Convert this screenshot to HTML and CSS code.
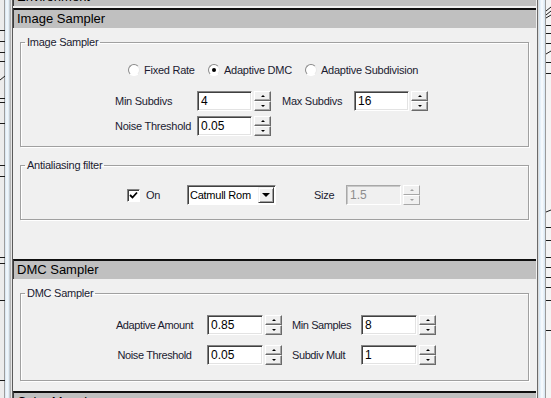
FILE: index.html
```html
<!DOCTYPE html>
<html>
<head>
	<title>V-Ray Settings</title>
	<link rel="stylesheet" href="styles.css">
</head>

<body>
	<div class="desk">
		<div class="edgeLeft">
			<svg class="ticks" width="5" height="398">
				<line x1="0" y1="30.5" x2="5" y2="30.5" />
				<line x1="0" y1="41.5" x2="5" y2="41.5" />
				<line x1="0" y1="52.5" x2="5" y2="52.5" />
				<line x1="0" y1="61.5" x2="5" y2="61.5" />
				<line x1="0" y1="80" x2="5" y2="76" />
				<line x1="0" y1="98.5" x2="5" y2="98.5" />
				<line x1="0" y1="102.5" x2="5" y2="102.5" />
				<line x1="0" y1="123.5" x2="5" y2="123.5" />
				<line x1="0" y1="165.5" x2="5" y2="165.5" />
				<line x1="0" y1="176.5" x2="5" y2="176.5" />
				<line x1="0" y1="257.5" x2="5" y2="257.5" />
				<line x1="0" y1="263.5" x2="5" y2="263.5" />
				<line x1="0" y1="300.5" x2="5" y2="300.5" />
				<line x1="0" y1="380.5" x2="5" y2="380.5" />
			</svg>
		</div>

		<div class="panel">
			<div class="rollHead first">Environment</div>
			<div class="rollHead">Image Sampler</div>
			<div class="rollBody">
				<fieldset class="group">
					<legend>Image Sampler</legend>
					<div class="row radios">
						<label class="radio r1"><span class="dot"></span>Fixed Rate</label>
						<label class="radio r2"><span class="dot on"></span>Adaptive DMC</label>
						<label class="radio"><span class="dot"></span>Adaptive Subdivision</label>
					</div>
					<div class="row subdivs">
						<span class="lbl w82">Min Subdivs</span>
						<span class="field">4</span>
						<span class="spin"><span class="spinBtn"><i class="up"></i></span><span class="spinBtn"><i class="down"></i></span></span>
						<span class="lbl w72 gapL">Max Subdivs</span>
						<span class="field">16</span>
						<span class="spin"><span class="spinBtn"><i class="up"></i></span><span class="spinBtn"><i class="down"></i></span></span>
					</div>
					<div class="row subdivs tight">
						<span class="lbl w82">Noise Threshold</span>
						<span class="field">0.05</span>
						<span class="spin"><span class="spinBtn"><i class="up"></i></span><span class="spinBtn"><i class="down"></i></span></span>
					</div>
				</fieldset>

				<fieldset class="group aa">
					<legend>Antialiasing filter</legend>
					<div class="row filter">
						<label class="check">
							<span class="box">
								<svg width="9" height="9" viewBox="0 0 9 9"><polyline points="1,4 3.5,6.5 8,1.5" /></svg>
							</span>On
						</label>
						<span class="combo">
							<span class="comboText">Catmull Rom</span>
							<span class="comboBtn"><i class="drop"></i></span>
						</span>
						<span class="lbl sizeLbl">Size</span>
						<span class="field off">1.5</span>
						<span class="spin off"><span class="spinBtn"><i class="up"></i></span><span class="spinBtn"><i class="down"></i></span></span>
					</div>
				</fieldset>
			</div>

			<div class="rollHead">DMC Sampler</div>
			<div class="rollBody">
				<fieldset class="group dmc">
					<legend>DMC Sampler</legend>
					<div class="row amounts">
						<span class="lbl mid">Adaptive Amount</span>
						<span class="field wide">0.85</span>
						<span class="spin"><span class="spinBtn"><i class="up"></i></span><span class="spinBtn"><i class="down"></i></span></span>
						<span class="lbl w69">Min Samples</span>
						<span class="field wide">8</span>
						<span class="spin"><span class="spinBtn"><i class="up"></i></span><span class="spinBtn"><i class="down"></i></span></span>
					</div>
					<div class="row amounts second">
						<span class="lbl mid">Noise Threshold</span>
						<span class="field wide">0.05</span>
						<span class="spin"><span class="spinBtn"><i class="up"></i></span><span class="spinBtn"><i class="down"></i></span></span>
						<span class="lbl w69">Subdiv Mult</span>
						<span class="field wide">1</span>
						<span class="spin"><span class="spinBtn"><i class="up"></i></span><span class="spinBtn"><i class="down"></i></span></span>
					</div>
				</fieldset>
			</div>

			<div class="rollHead">Color Mapping</div>
		</div>

		<div class="edgeRight">
			<svg class="ticks" width="5" height="398">
				<line x1="0" y1="11" x2="5" y2="7" />
				<line x1="0" y1="15" x2="5" y2="11" />
				<line x1="0" y1="18" x2="5" y2="15" />
				<line x1="0" y1="25.5" x2="5" y2="25.5" />
				<line x1="0" y1="33.5" x2="5" y2="33.5" />
				<line x1="0" y1="43.5" x2="5" y2="43.5" />
				<line x1="0" y1="54" x2="5" y2="51" />
				<line x1="0" y1="62.5" x2="5" y2="62.5" />
				<line x1="0" y1="73.5" x2="5" y2="73.5" />
				<line x1="0" y1="212" x2="5" y2="210" />
				<line x1="0" y1="227.5" x2="5" y2="227.5" />
				<line x1="0" y1="240.5" x2="5" y2="240.5" />
				<line x1="0" y1="257.5" x2="5" y2="257.5" />
				<line x1="0" y1="267.5" x2="5" y2="267.5" />
				<line x1="0" y1="277.5" x2="5" y2="277.5" />
				<line x1="0" y1="287.5" x2="5" y2="287.5" />
				<line x1="0" y1="300.5" x2="5" y2="300.5" />
				<line x1="0" y1="330.5" x2="5" y2="330.5" />
			</svg>
		</div>
	</div>
</body>
</html>
```

FILE: styles.css
```css
body {
	margin: 0;
	font-family: "Liberation Sans", Arial, sans-serif;
	font-size: 11px;
	letter-spacing: -0.25px;
	color: #1b1b30;
	background: #f0f0f0;
}

.desk {
	display: flex;
	height: 398px;
	overflow: hidden;
}

/* window edges on both sides */
.edgeLeft {
	width: 13px;
	flex: none;
	display: flex;
	background: linear-gradient(to right, #ececec 0 4px, #9c9c9c 4px 5px, #d3e3f0 5px, #f7fbfe 7px, #d9e7f2 9px, #b4b4b4 10px 11px, #e6e6e6 11px 12px, #5a5a5a 12px 13px);
}

.edgeRight {
	flex: 1;
	display: flex;
	justify-content: flex-end;
	background: linear-gradient(to right, #6a6a6a 0 1px, #dcdcdc 1px 2px, #d2e5f3 2px, #fbfdff 5px, #d6e6f2 8px, #9a9a9a 8px 9px, #f4f4f4 9px);
}

.ticks line {
	stroke: #1a1a1a;
	stroke-width: 1;
}

.panel {
	width: 524px;
	flex: none;
	background: #f0f0f0;
}

/* rollout title bars */
.rollHead {
	height: 18px;
	line-height: 18px;
	margin: 2px 1px 0 0;
	padding-left: 3px;
	border-top: 2px solid #101010;
	border-left: 1px solid #3c3c3c;
	background: #c0c0c0;
	color: #000;
	font-size: 13px;
	letter-spacing: 0;
}

.rollHead.first {
	margin-top: -14px;
}

.rollBody {
	padding-bottom: 8px;
}

/* group boxes */
.group {
	margin: 8px 8px 0 7px;
	padding: 0 0 10px;
	min-width: 0;
	border: 1px solid #a0a0a0;
	box-shadow: inset 1px 1px 0 #fff, 1px 1px 0 #fff;
}

.group legend {
	margin-left: 4px;
	padding: 0 2px;
	line-height: 13px;
}

.group.aa {
	margin-top: 12px;
	margin-bottom: 29px;
	padding-bottom: 14px;
}

.group.dmc {
	padding-bottom: 15px;
}

.row {
	display: flex;
	align-items: center;
	height: 20px;
}

.lbl {
	flex: none;
	white-space: nowrap;
}

.w82 { width: 82px; }
.w72 { width: 72px; }
.w69 { width: 69px; margin-left: 10px; }
.gapL { margin-left: 11px; }

/* radios */
.radios {
	height: 14px;
	margin-top: 14px;
	padding-left: 107px;
}

.radio {
	display: flex;
	align-items: center;
	flex: none;
}

.radio.r1 { width: 80px; }
.radio.r2 { width: 97px; }

.dot {
	width: 12px;
	height: 12px;
	box-sizing: border-box;
	margin-right: 4px;
	border-radius: 50%;
	border: 1px solid;
	border-color: #8a8a8a #e8e8e8 #fff #8a8a8a;
	background: #fff;
	display: flex;
	align-items: center;
	justify-content: center;
}

.dot.on::after {
	content: "";
	width: 4px;
	height: 4px;
	border-radius: 50%;
	background: #000;
}

.subdivs {
	margin-top: 14px;
	padding-left: 94px;
}

.subdivs.tight {
	margin-top: 5px;
}

/* edit boxes and spinners */
.field {
	flex: none;
	width: 55px;
	height: 20px;
	box-sizing: border-box;
	padding-left: 3px;
	line-height: 18px;
	border: 1px solid;
	border-color: #838383 #fff #fff #838383;
	box-shadow: inset 1px 1px 0 #404040, inset -1px -1px 0 #e3e3e3;
	background: #fff;
	color: #000;
	font-size: 12px;
	letter-spacing: 0;
}

.field.wide {
	width: 56px;
}

.field.off {
	background: #f0f0f0;
	color: #8d8d8d;
	border-color: #a8a8a8 #fff #fff #a8a8a8;
	box-shadow: inset 1px 1px 0 #c8c8c8;
}

.spin {
	flex: none;
	width: 17px;
	height: 20px;
	margin-left: 2px;
	display: flex;
	flex-direction: column;
}

.spinBtn {
	height: 10px;
	box-sizing: border-box;
	border: 1px solid;
	border-color: #fff #6a6a6a #6a6a6a #fff;
	box-shadow: inset -1px -1px 0 #a8a8a8;
	background: #f0f0f0;
	display: flex;
	align-items: center;
	justify-content: center;
}

.up, .down {
	width: 0;
	height: 0;
	border-left: 2px solid transparent;
	border-right: 2px solid transparent;
}

.up { border-bottom: 2px solid #000; }
.down { border-top: 2px solid #000; }

.spin.off .spinBtn {
	border-color: #fff #a8a8a8 #a8a8a8 #fff;
	box-shadow: none;
}

.spin.off .up { border-bottom-color: #a0a0a0; }
.spin.off .down { border-top-color: #a0a0a0; }

/* antialiasing row */
.filter {
	margin-top: 13px;
	padding-left: 106px;
}

.check {
	width: 60px;
	flex: none;
	display: flex;
	align-items: center;
}

.box {
	width: 13px;
	height: 13px;
	box-sizing: border-box;
	margin-right: 6px;
	border: 1px solid;
	border-color: #838383 #fff #fff #838383;
	box-shadow: inset 1px 1px 0 #404040;
	background: #fff;
	display: flex;
	align-items: center;
	justify-content: center;
}

.box polyline {
	fill: none;
	stroke: #000;
	stroke-width: 1.8;
}

.combo {
	flex: none;
	width: 89px;
	height: 20px;
	box-sizing: border-box;
	display: flex;
	border: 1px solid;
	border-color: #838383 #fff #fff #838383;
	box-shadow: inset 1px 1px 0 #404040;
	background: #fff;
	color: #000;
}

.comboText {
	flex: 1;
	padding: 1px 0 0 2px;
	line-height: 16px;
	white-space: nowrap;
}

.comboBtn {
	width: 16px;
	margin: 1px 1px 1px 0;
	box-sizing: border-box;
	border: 1px solid;
	border-color: #f0f0f0 #404040 #404040 #f0f0f0;
	box-shadow: inset 1px 1px 0 #fff, inset -1px -1px 0 #a0a0a0;
	background: #f0f0f0;
	display: flex;
	align-items: center;
	justify-content: center;
}

.drop {
	width: 0;
	height: 0;
	border-left: 4px solid transparent;
	border-right: 4px solid transparent;
	border-top: 4px solid #000;
}

.sizeLbl {
	width: 32px;
	margin-left: 38px;
}

/* dmc rows */
.amounts {
	margin-top: 15px;
	padding-left: 86px;
}

.amounts.second {
	margin-top: 10px;
}

.lbl.mid {
	width: 95px;
	margin-right: 5px;
	text-align: center;
	letter-spacing: -0.4px;
}

.amounts .w69 {
	letter-spacing: -0.4px;
}
```
